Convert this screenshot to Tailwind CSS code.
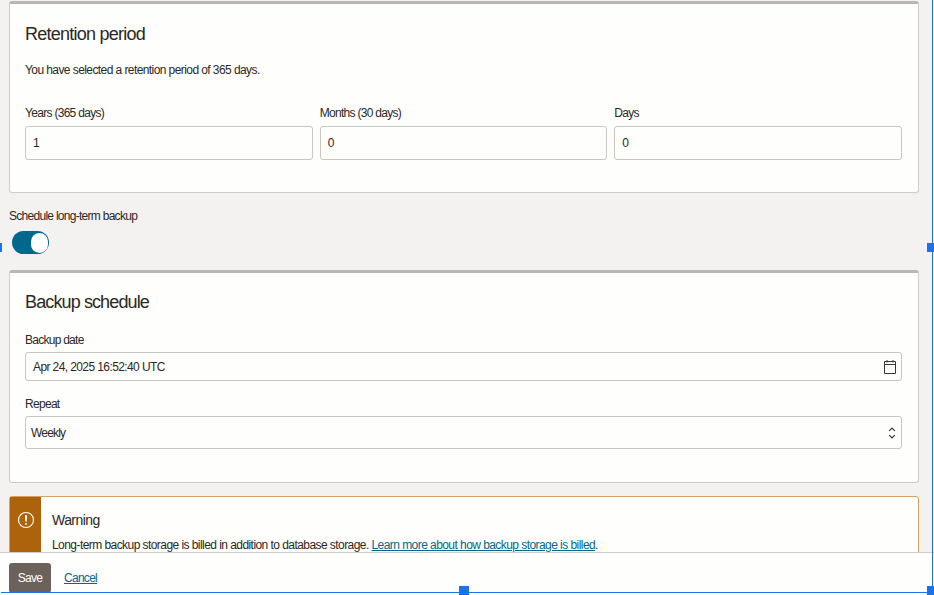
<!DOCTYPE html>
<html lang="en">
  <head>
    <meta charset="UTF-8" />
    <meta name="viewport" content="width=device-width, initial-scale=1.0" />
    <script src="https://cdn.jsdelivr.net/npm/@tailwindcss/browser@4"></script>
    <title>Long-term backup</title>
  </head>
  <body class="bg-[#f3f2f1] font-['Liberation_Sans',Arial,sans-serif] text-[#2b2724]">
    <div class="relative h-[595px] w-[934px] overflow-hidden tracking-[-0.56px]">
      <main class="flex flex-col pl-[9px] pr-[15px] pt-px">
        <!-- retention -->
        <section class="h-[192px] rounded-[3px] border border-t-[3px] border-[#cfcbc7] border-t-[#bcb6b1] bg-[#fefefc] pl-[15px] pr-[16px] pt-[18px]">
          <h2 class="text-[18px] leading-[24px] tracking-[-0.75px]">Retention period</h2>
          <p class="mt-[16px] text-[12px] leading-[16px] tracking-[-0.58px]">You have selected a retention period of 365 days.</p>
          <div class="mt-[27px] grid grid-cols-3 gap-[7px]">
            <div>
              <label class="block text-[12px] leading-[16px] tracking-[-0.7px]">Years (365 days)</label>
              <div class="mt-[5px] flex h-[34px] items-center rounded-[3px] border border-[#c9c5c1] bg-[#fefefc] px-[7px] text-[12px]">1</div>
            </div>
            <div>
              <label class="block text-[12px] leading-[16px] tracking-[-0.7px]">Months (30 days)</label>
              <div class="mt-[5px] flex h-[34px] items-center rounded-[3px] border border-[#c9c5c1] bg-[#fefefc] px-[7px] text-[12px]">0</div>
            </div>
            <div>
              <label class="block text-[12px] leading-[16px] tracking-[-0.7px]">Days</label>
              <div class="mt-[5px] flex h-[34px] items-center rounded-[3px] border border-[#c9c5c1] bg-[#fefefc] px-[7px] text-[12px]">0</div>
            </div>
          </div>
        </section>

        <!-- toggle -->
        <label class="mt-[15px] block text-[12px] leading-[16px] tracking-[-0.72px]">Schedule long-term backup</label>
        <div class="ml-[3px] mt-[7px] flex h-[23px] w-[37px] items-center justify-end rounded-full bg-[#00688c] pr-[1px]">
          <span class="h-[20px] w-[17px] rounded-full bg-white"></span>
        </div>

        <!-- schedule -->
        <section class="mt-[16px] h-[213px] rounded-[3px] border border-t-[3px] border-[#cfcbc7] border-t-[#bcb6b1] bg-[#fefefc] pl-[15px] pr-[16px] pt-[17px]">
          <h2 class="text-[18px] leading-[24px] tracking-[-0.88px]">Backup schedule</h2>
          <label class="mt-[18px] block text-[12px] leading-[16px] tracking-[-0.74px]">Backup date</label>
          <div class="mt-[4px] flex h-[29px] items-center justify-between rounded-[3px] border border-[#c9c5c1] pl-[7px] pr-[4px] text-[12px] tracking-[-0.6px]">
            <span>Apr 24, 2025 16:52:40 UTC</span>
            <svg width="14" height="16" viewBox="0 0 14 16" fill="none" stroke="#3a3633" stroke-width="1">
              <path d="M1.5 2.5h11v12h-11zM1.5 5.5h11M4 1v2.5M10 1v2.5" />
            </svg>
          </div>
          <label class="mt-[15px] block text-[12px] leading-[16px] tracking-[-0.7px]">Repeat</label>
          <div class="mt-[4px] flex h-[33px] items-center justify-between rounded-[3px] border border-[#c9c5c1] pl-[5px] pr-[5px] text-[12px] tracking-[-0.8px]">
            <span>Weekly</span>
            <svg width="8" height="14" viewBox="0 0 8 14" fill="none" stroke="#3a3633" stroke-width="1.2">
              <path d="M1.2 4.8L4 2l2.8 2.8M1.2 9.2L4 12l2.8-2.8" />
            </svg>
          </div>
        </section>

        <!-- warning, runs under the footer -->
        <section class="mt-[13px] flex h-[90px] rounded-[3px] border border-[#d9a066] bg-[#fefefc]">
          <div class="flex w-[31px] justify-center bg-[#ac630c] pt-[14px]">
            <svg width="18" height="18" viewBox="0 0 18 18" fill="none" stroke="#fff" stroke-width="1.1">
              <circle cx="9" cy="9" r="7.5" />
              <path d="M9 4v6.5M9 12.2v1.6" stroke-width="1.7" />
            </svg>
          </div>
          <div class="pl-[11px] pt-[14px]">
            <h3 class="text-[14px] leading-[18px]">Warning</h3>
            <p class="mt-[8px] text-[12px] leading-[16px]">Long-term backup storage is billed in addition to database storage. <a class="text-[#00688c] underline">Learn more about how backup storage is billed</a>.</p>
          </div>
        </section>
      </main>

      <!-- sticky footer -->
      <footer class="absolute bottom-0 left-0 right-0 flex h-[43px] items-start gap-[13px] border-t border-[#cfcbc7] bg-[#fefefc] pl-[9px] pt-[10px]">
        <button class="h-[30px] w-[42px] rounded-[3px] bg-[#6b625c] text-[12px] tracking-[-0.7px] text-white">Save</button>
        <a class="pt-[7px] text-[12px] leading-[16px] tracking-[-0.72px] text-[#00688c] underline">Cancel</a>
      </footer>

      <!-- selection outline from the screenshot -->
      <div class="absolute bottom-[2px] left-[1px] right-[1px] top-0 border-b border-r border-[#1a73e8]"></div>
      <span class="absolute left-[-5px] top-[243px] h-[9px] w-[7px] bg-[#1a73e8]"></span>
      <span class="absolute left-[927px] top-[243px] h-[9px] w-[7px] bg-[#1a73e8]"></span>
      <span class="absolute left-[459px] top-[586px] h-[9px] w-[10px] bg-[#1a73e8]"></span>
      <span class="absolute left-[927px] top-[586px] h-[9px] w-[7px] bg-[#1a73e8]"></span>
    </div>
  </body>
</html>
